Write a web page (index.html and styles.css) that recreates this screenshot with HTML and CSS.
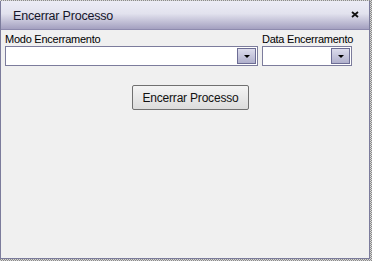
FILE: index.html
```html
<!DOCTYPE html>
<html lang="pt">
<head>
    <meta charset="UTF-8">
    <title>Encerrar Processo</title>
    <link rel="stylesheet" href="styles.css">
</head>
<body>
    <div class="janela">
        <div class="titulo">
            <span>Encerrar Processo</span>
            <svg class="fechar" width="8" height="7" viewBox="0 0 8 7">
                <path d="M1 1 L7 6 M7 1 L1 6" stroke="#111" stroke-width="1.8" fill="none"/>
            </svg>
        </div>
        <div class="conteudo">
            <div class="campos">
                <div class="campo">
                    <label>Modo Encerramento</label>
                    <div class="combo largo"><span class="seta"></span></div>
                </div>
                <div class="campo">
                    <label>Data Encerramento</label>
                    <div class="combo estreito"><span class="seta"></span></div>
                </div>
            </div>
            <div class="acoes">
                <button class="botao">Encerrar Processo</button>
            </div>
        </div>
    </div>
</body>
</html>
```

FILE: styles.css
```css
html, body { margin: 0; height: 100%; }
body {
    font-family: "Liberation Sans", Arial, sans-serif;
    background: repeating-conic-gradient(#8a8a8a 0 25%, #d6d6d6 0 50%) 0 0 / 2px 2px;
}
.janela {
    width: 368px;
    height: 257px;
    margin-top: 1px;
    border: 1px solid #7c7c9c;
    border-top: none;
    background: #f0f0f0;
}
.titulo {
    height: 28px;
    border-bottom: 1px solid #8e8aae;
    background: linear-gradient(#ececf6, #e2e2ee 45%, #a4a0c0);
    display: flex;
    align-items: center;
    justify-content: space-between;
    padding: 0 10px 0 12px;
    font-size: 12.5px;
    letter-spacing: -0.2px;
    color: #16162a;
}
.titulo span { padding-top: 2px; }
.fechar { margin-top: -1px; }
.conteudo { padding: 3px 4px; }
.campos { display: flex; gap: 4px; }
.campo { display: flex; flex-direction: column; }
.campo label {
    font-size: 11px;
    letter-spacing: -0.25px;
    line-height: 13px;
    color: #000;
}
.combo {
    height: 18px;
    margin-top: 0;
    border: 1px solid #7c7c9c;
    background: #fff;
    display: flex;
    justify-content: flex-end;
    align-items: center;
    padding-right: 1px;
}
.largo { width: 250px; }
.estreito { width: 87px; }
.seta {
    width: 17px;
    height: 14px;
    border: 1px solid #6c6c94;
    background: linear-gradient(#dcdcec, #b0b0cc);
    position: relative;
}
.seta::after {
    content: "";
    position: absolute;
    left: 6px;
    top: 6px;
    border-left: 3px solid transparent;
    border-right: 3px solid transparent;
    border-top: 3px solid #000;
}
.acoes { padding: 19px 0 0 127px; }
.botao {
    width: 117px;
    height: 25px;
    border: 1px solid #707070;
    border-radius: 2px;
    background: linear-gradient(#f4f4f4, #e8e8e8 50%, #dcdcdc);
    font-family: "Liberation Sans", Arial, sans-serif;
    font-size: 12px;
    letter-spacing: -0.2px;
    color: #111;
    padding: 0;
}
```
